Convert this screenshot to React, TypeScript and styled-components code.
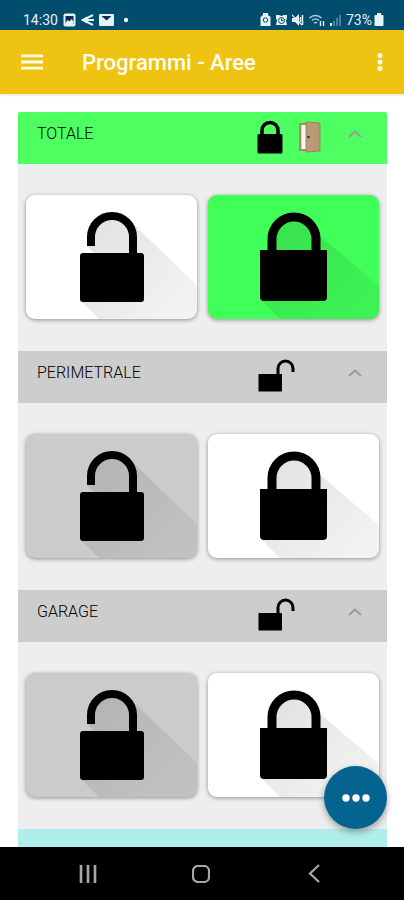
import React, { useState } from "react";
import styled, { createGlobalStyle } from "styled-components";

const GlobalStyle = createGlobalStyle`
  *, *::before, *::after { box-sizing: border-box; }
  body { margin: 0; background: #ffffff; font-family: Roboto, "Liberation Sans", sans-serif; }
  button { font: inherit; color: inherit; border: 0; padding: 0; background: none; cursor: pointer; }
  svg { display: block; }
`;

const Screen = styled.div`
  display: flex;
  flex-direction: column;
  height: 100vh;
  overflow: hidden;
`;

const StatusBar = styled.div`
  flex: none;
  display: flex;
  justify-content: space-between;
  align-items: center;
  height: 30px;
  padding: 9px 20px 0 23px;
  background: #004d6e;
  color: #e6f1f5;
  font-size: 14px;
  line-height: 20px;
`;

const StatusGroup = styled.div`
  display: flex;
  align-items: center;
  gap: 5px;
`;

const Level = styled.span`
  display: flex;
  align-items: center;
  gap: 2px;
`;

const AppBar = styled.header`
  flex: none;
  display: flex;
  align-items: center;
  height: 64px;
  padding: 0 12px 0 20px;
  background: #efc312;
  color: #fffdf0;
  box-shadow: 0 1px 2px rgba(0, 0, 0, 0.12);
`;

const BarButton = styled.button`
  display: grid;
  place-items: center;
  width: 24px;
  height: 40px;
`;

const Title = styled.h1`
  flex: 1;
  margin: 0 0 0 38px;
  padding-top: 2px;
  font-size: 22px;
  font-weight: 500;
  line-height: 28px;
`;

const Content = styled.main`
  flex: 1;
  min-height: 0;
  position: relative;
  overflow: hidden;
  padding: 18px 17px 0 18px;
`;

const Areas = styled.div`
  border-radius: 2px 2px 0 0;
  overflow: hidden;
`;

const AreaHeader = styled.button<{ $color: string }>`
  display: flex;
  align-items: flex-start;
  width: 100%;
  height: 52px;
  padding: 8px 20px 0 19px;
  background: ${(p) => p.$color};
  text-align: left;
`;

const AreaName = styled.span`
  flex: 1;
  color: #000000;
  font-size: 16px;
  font-weight: 300;
  line-height: 28px;
`;

const AreaIcons = styled.span`
  display: flex;
  gap: 2px;
  width: 64px;
  margin-right: 22px;
`;

const Chevron = styled.span<{ $open: boolean }>`
  display: grid;
  place-items: center;
  width: 24px;
  height: 28px;
  color: #999999;
  transform: ${(p) => (p.$open ? "none" : "rotate(180deg)")};
`;

const AreaBody = styled.div`
  display: grid;
  grid-template-columns: 1fr 1fr;
  gap: 11px;
  padding: 31px 8px 32px;
  background: #eeeeee;
`;

const Tile = styled.button<{ $color: string }>`
  height: 124px;
  overflow: hidden;
  border-radius: 9px;
  background: ${(p) => p.$color};
  box-shadow: 0 1px 4px rgba(0, 0, 0, 0.4);

  svg { width: 100%; height: 100%; }
`;

const Fab = styled.button`
  position: absolute;
  right: 17px;
  bottom: 18px;
  display: grid;
  place-items: center;
  width: 63px;
  height: 63px;
  border-radius: 50%;
  background: #04648f;
  box-shadow: 0 3px 7px rgba(0, 0, 0, 0.35);
`;

const NavBar = styled.nav`
  flex: none;
  display: grid;
  grid-template-columns: repeat(3, 1fr);
  height: 53px;
  padding: 0 33px 0 31px;
  background: #000000;
  color: #a8a8a8;
`;

const NavButton = styled.button`
  display: grid;
  place-items: center;
`;

const TileDrawing = ({ kind }: { kind: "open" | "closed" }) => {
  const id = React.useId();
  const open = kind === "open";
  return (
    <svg viewBox="0 0 171 124" preserveAspectRatio="xMidYMid slice" aria-hidden="true">
      <defs>
        <linearGradient id={id} gradientUnits="userSpaceOnUse" x1="70" y1="35" x2="150" y2="115">
          <stop offset="0" stopColor="#000" stopOpacity="0.11" />
          <stop offset="1" stopColor="#000" stopOpacity="0.05" />
        </linearGradient>
      </defs>
      {open ? (
        <>
          <path d="M61 51V42A25 25 0 0 1 104 26L171 90V124H73L56 107V58H68Z" fill={`url(#${id})`} />
          <path d="M65 51V42a21 21 0 0 1 42 0V60" fill="none" stroke="#000" strokeWidth="8" />
          <rect x="54" y="58" width="64" height="49" rx="3" fill="#000" />
        </>
      ) : (
        <>
          <path d="M60 56V44A26 26 0 0 1 104 34L171 91V124H72L54 106V56Z" fill={`url(#${id})`} />
          <path d="M64 57V44a22 22 0 0 1 44 0V57" fill="none" stroke="#000" strokeWidth="9" />
          <path d="M52 55H119V102a4 4 0 0 1-4 4H56a4 4 0 0 1-4-4Z" fill="#000" />
        </>
      )}
    </svg>
  );
};

const ClosedLock = () => (
  <svg width="40" height="34" viewBox="0 0 40 34" aria-hidden="true">
    <path d="M5 15V10.500a8 8 0 0 1 16 0V15" fill="none" stroke="#000" strokeWidth="3.600" />
    <rect x="0.500" y="14" width="25" height="19.500" rx="1.500" fill="#000" />
  </svg>
);

const OpenLock = () => (
  <svg width="40" height="34" viewBox="0 0 40 34" aria-hidden="true">
    <path d="M21 16V9.500a7.500 7.500 0 0 1 15 0V13" fill="none" stroke="#000" strokeWidth="3" />
    <rect x="1.500" y="15" width="23.500" height="17.500" rx="0.500" fill="#000" />
  </svg>
);

const Door = () => (
  <svg width="22" height="34" viewBox="0 0 22 34" aria-hidden="true">
    <path d="M0 3H20V31H0Z" fill="#a98b63" />
    <path d="M2 5H8V29H2Z" fill="#f7f5f2" />
    <path d="M2 5H3V29H2Z" fill="#d9cdbb" />
    <path d="M7 2L21 3V31L7 32Z" fill="#b99a76" stroke="#94795a" strokeWidth="0.800" />
    <circle cx="9.500" cy="17" r="1.300" fill="#3e3022" />
  </svg>
);

type Area = { name: string; color: string; armed: boolean; door: boolean; left: string; right: string };

const areas: Area[] = [
  { name: "TOTALE", color: "#4eff61", armed: true, door: true, left: "#ffffff", right: "#40ff58" },
  { name: "PERIMETRALE", color: "#cdcdcd", armed: false, door: false, left: "#cbcbcb", right: "#ffffff" },
  { name: "GARAGE", color: "#cdcdcd", armed: false, door: false, left: "#cbcbcb", right: "#ffffff" },
];

const AreaSection = ({ area }: { area: Area }) => {
  const [open, setOpen] = useState(true);
  return (
    <section>
      <AreaHeader $color={area.color} aria-expanded={open} onClick={() => setOpen(!open)}>
        <AreaName>{area.name}</AreaName>
        <AreaIcons>
          {area.armed ? <ClosedLock /> : <OpenLock />}
          {area.door && <Door />}
        </AreaIcons>
        <Chevron $open={open}>
          <svg width="14" height="8" viewBox="0 0 14 8" fill="none" stroke="currentColor" strokeWidth="1.800">
            <path d="M1 7L7 1.500L13 7" />
          </svg>
        </Chevron>
      </AreaHeader>
      {open && (
        <AreaBody>
          <Tile $color={area.left} aria-label={`Disinserisci ${area.name}`}>
            <TileDrawing kind="open" />
          </Tile>
          <Tile $color={area.right} aria-label={`Inserisci ${area.name}`}>
            <TileDrawing kind="closed" />
          </Tile>
        </AreaBody>
      )}
    </section>
  );
};

export default function App() {
  return (
    <>
      <GlobalStyle />
      <Screen>
        <StatusBar>
          <StatusGroup>
            <span>14:30</span>
            <svg width="13" height="14" viewBox="0 0 13 14" aria-hidden="true">
              <rect x="0.500" y="0.500" width="12" height="13" rx="2" fill="#e6f1f5" />
              <path d="M2.500 3H10.500V11H2.500Z" fill="#0a2c5c" />
              <path d="M2.500 9.500L5 7L6.500 8.500L8.500 6L10.500 8.500V11H2.500Z" fill="#e6f1f5" />
            </svg>
            <svg width="13" height="12" viewBox="0 0 13 12" aria-hidden="true">
              <path d="M12 1L2 6L12 11" fill="none" stroke="#e6f1f5" strokeWidth="2" />
              <path d="M0 6L6 2.500V9.500ZM5 5H13V7H5Z" fill="#e6f1f5" />
            </svg>
            <svg width="15" height="12" viewBox="0 0 15 12" aria-hidden="true">
              <rect width="15" height="12" rx="1" fill="#e6f1f5" />
              <path d="M2.500 2H12.500L7.500 6.500Z" fill="#0a2c5c" />
            </svg>
            <svg width="20" height="6" viewBox="0 0 20 6" aria-hidden="true">
              <circle cx="7" cy="3" r="2.200" fill="#e6f1f5" />
            </svg>
          </StatusGroup>
          <StatusGroup>
            <svg width="11" height="13" viewBox="0 0 11 13" aria-hidden="true">
              <path d="M3 0H8V2L10.500 4V13H0.500V4L3 2Z" fill="#e6f1f5" />
              <circle cx="5.500" cy="7" r="2.200" fill="none" stroke="#004d6e" />
            </svg>
            <svg width="11" height="12" viewBox="0 0 11 12" aria-hidden="true">
              <path d="M0 1H3L5.500 2L8 1H11V4L10 6.500L11 11H0L1 6.500L0 4Z" fill="#e6f1f5" />
              <circle cx="5.500" cy="6.500" r="3" fill="none" stroke="#004d6e" />
              <path d="M5.500 4.500V6.500H7.500" fill="none" stroke="#004d6e" />
            </svg>
            <svg width="12" height="12" viewBox="0 0 12 12" aria-hidden="true">
              <path d="M0 4H3L7 0V12L3 8H0Z" fill="#e6f1f5" />
              <path d="M0 1L10 11" stroke="#e6f1f5" strokeWidth="1.200" />
              <path d="M10.500 1V11M8.500 3V8" stroke="#e6f1f5" strokeWidth="1.500" />
            </svg>
            <svg width="16" height="12" viewBox="0 0 16 12" fill="none" aria-hidden="true">
              <path d="M0.500 4A8.500 8.500 0 0 1 12.500 4M3 6.500A5 5 0 0 1 10 6.500M5 9A2.500 2.500 0 0 1 8 9" stroke="#b9d0da" strokeWidth="1.400" />
              <path d="M11.500 7V12M14.500 7V12" stroke="#e6f1f5" strokeWidth="1.400" />
            </svg>
            <svg width="11" height="12" viewBox="0 0 11 12" aria-hidden="true">
              <path d="M0 9H2V12H0Z" fill="#e6f1f5" />
              <path d="M3 7H5V12H3ZM6 4H8V12H6ZM9 1H11V12H9Z" fill="#4c8298" />
            </svg>
            <Level>
              73%
              <svg width="10" height="13" viewBox="0 0 10 13" aria-hidden="true">
                <path d="M3 0H7V2H8.500Q9.500 2 9.500 3V12Q9.500 13 8.500 13H1.500Q0.500 13 0.500 12V3Q0.500 2 1.500 2H3Z" fill="#e6f1f5" />
              </svg>
            </Level>
          </StatusGroup>
        </StatusBar>
        <AppBar>
          <BarButton aria-label="Menu">
            <svg width="22" height="16" viewBox="0 0 22 16" fill="currentColor">
              <path d="M0 0.500H22V3.300H0ZM0 6.600H22V9.400H0ZM0 12.700H22V15.500H0Z" />
            </svg>
          </BarButton>
          <Title>Programmi - Aree</Title>
          <BarButton aria-label="Altre opzioni">
            <svg width="6" height="20" viewBox="0 0 6 20" fill="currentColor">
              <circle cx="3" cy="3.500" r="2.500" />
              <circle cx="3" cy="10" r="2.500" />
              <circle cx="3" cy="16.500" r="2.500" />
            </svg>
          </BarButton>
        </AppBar>
        <Content>
          <Areas>
            {areas.map((area) => (
              <AreaSection key={area.name} area={area} />
            ))}
            <AreaHeader $color="#b0eeec" aria-label="Area successiva" />
          </Areas>
          <Fab aria-label="Altre azioni">
            <svg width="28" height="8" viewBox="0 0 28 8" fill="#ffffff">
              <circle cx="4" cy="4" r="3.700" />
              <circle cx="14" cy="4" r="3.700" />
              <circle cx="24" cy="4" r="3.700" />
            </svg>
          </Fab>
        </Content>
        <NavBar>
          <NavButton aria-label="Recenti">
            <svg width="18" height="18" viewBox="0 0 18 18" stroke="currentColor" strokeWidth="2.600">
              <path d="M2 0V18M9 0V18M16 0V18" />
            </svg>
          </NavButton>
          <NavButton aria-label="Home">
            <svg width="18" height="18" viewBox="0 0 18 18" fill="none" stroke="currentColor" strokeWidth="2.200">
              <rect x="1" y="1" width="16" height="16" rx="5" />
            </svg>
          </NavButton>
          <NavButton aria-label="Indietro">
            <svg width="12" height="19" viewBox="0 0 12 19" fill="none" stroke="currentColor" strokeWidth="2.200">
              <path d="M11 1L2 9.500L11 18" />
            </svg>
          </NavButton>
        </NavBar>
      </Screen>
    </>
  );
}
